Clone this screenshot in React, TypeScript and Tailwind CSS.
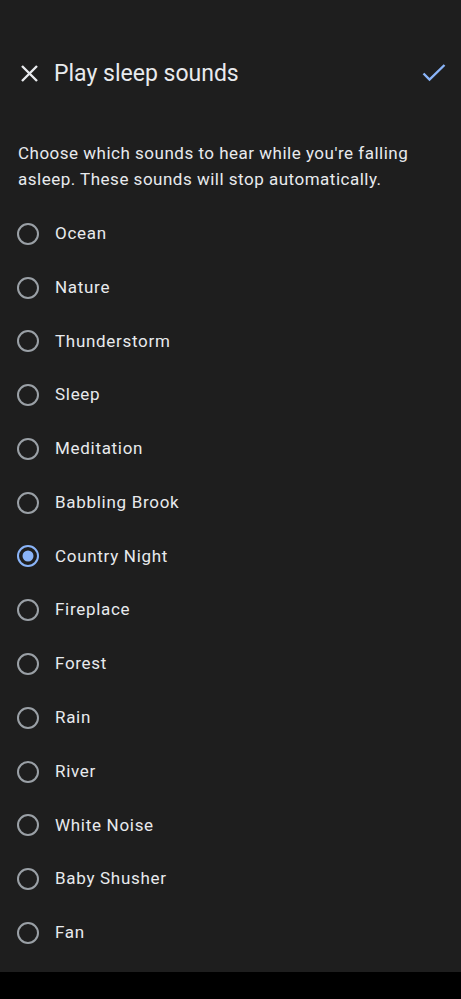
import React from "react";

const sounds = [
  "Ocean",
  "Nature",
  "Thunderstorm",
  "Sleep",
  "Meditation",
  "Babbling Brook",
  "Country Night",
  "Fireplace",
  "Forest",
  "Rain",
  "River",
  "White Noise",
  "Baby Shusher",
  "Fan",
];

function Radio({ checked }: { checked: boolean }) {
  return (
    <svg width="24" height="24" viewBox="0 0 24 24" className="shrink-0">
      <circle
        cx="12"
        cy="12"
        r="10"
        fill="none"
        stroke={checked ? "#8ab4f8" : "#9aa0a6"}
        strokeWidth="2"
      />
      {checked && <circle cx="12" cy="12" r="5.5" fill="#8ab4f8" />}
    </svg>
  );
}

export default function App() {
  const selected = "Country Night";

  return (
    <div
      className="flex h-[999px] w-[461px] flex-col bg-black text-[#e8eaed]"
      style={{ fontFamily: "Roboto, 'Noto Sans', sans-serif" }}
    >
      <div className="h-[972px] bg-[#1e1e1e]">
        <div className="mt-[45px] flex h-14 items-center pl-[21px] pr-[15px]">
          <svg width="17" height="17" viewBox="0 0 17 17" className="shrink-0">
            <path d="M1 1L16 16M16 1L1 16" stroke="#e8eaed" strokeWidth="2.4" />
          </svg>
          <h1 className="ml-4 flex-1 text-[23px] font-normal leading-none">Play sleep sounds</h1>
          <svg width="24" height="18" viewBox="0 0 24 18">
            <path d="M1.5 9.5L7.5 15.5L22.5 1" fill="none" stroke="#8ab4f8" strokeWidth="2.4" />
          </svg>
        </div>

        <p className="mt-[39px] px-[18px] text-[17px] leading-[26px] tracking-[0.5px] text-[#e8eaed]">
          Choose which sounds to hear while you're falling asleep. These sounds will stop automatically.
        </p>

        <ul className="mt-[15px]">
          {sounds.map((s) => (
            <li key={s} className="flex h-[53.77px] items-center pl-4">
              <Radio checked={s === selected} />
              <span className="ml-[15px] text-[17px] tracking-[0.7px]">{s}</span>
            </li>
          ))}
        </ul>
      </div>
    </div>
  );
}
